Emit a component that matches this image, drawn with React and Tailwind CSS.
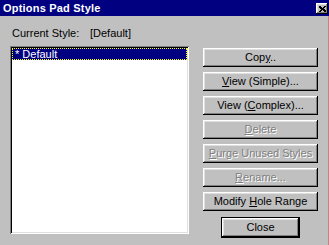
import React from 'react';

const bevel =
  'shadow-[inset_-1px_-1px_#000,inset_1px_1px_#fff,inset_-2px_-2px_#808080,inset_2px_2px_#dfdfdf]';

const Btn = ({ children, disabled, isDefault, className = '' }) => (
  <div
    className={`h-[19px] flex items-center justify-center bg-[#c0c0c0] text-[11px] leading-none ${bevel} ${
      disabled ? 'text-[#808080] [text-shadow:1px_1px_0_#fff]' : 'text-black'
    } ${isDefault ? 'outline outline-1 outline-black' : ''} ${className}`}
  >
    <span>{children}</span>
  </div>
);

const U = ({ children }) => <span className="underline underline-offset-[1px]">{children}</span>;

export default function App() {
  return (
    <div
      className="w-[329px] h-[245px] bg-[#c0c0c0] flex flex-col overflow-hidden"
      style={{ fontFamily: '"Liberation Sans", Arial, sans-serif' }}
    >
      <div className="h-[16px] bg-[#000080] flex items-center justify-between pl-[3px] pr-[1px]">
        <span className="text-white font-bold text-[11px] leading-none tracking-[0.2px]">Options Pad Style</span>
        <div className={`w-[12px] h-[11px] mt-[1px] bg-[#c0c0c0] flex items-center justify-center ${bevel}`}>
          <svg width="7" height="6" viewBox="0 0 7 6">
            <path d="M0 0h2v1h1v1h1V1h1V0h2v1H6v1H5v1h1v1h1v2H5V5H4V4H3v1H2v1H0V5h1V4h1V3H1V2H0z" fill="#000" />
          </svg>
        </div>
      </div>
      <div className="flex-1 flex border-r border-[#c08484]">
        <div className="pl-[10px] pt-[11px] flex flex-col">
          <div className="flex h-[13px] items-center text-[11px] text-black">
            <span className="pl-[2px] w-[80px]">Current Style:</span>
            <span>[Default]</span>
          </div>
          <div className="mt-[6px] w-[179px] h-[188px] bg-white p-[2px] shadow-[inset_1px_1px_#808080,inset_-1px_-1px_#fff,inset_2px_2px_#000,inset_-2px_-2px_#dfdfdf]">
            <div className="h-[12px] bg-[#000080] outline outline-1 outline-dotted outline-[#ffff00] -outline-offset-1 flex items-center pl-[3px] text-white text-[11px] leading-none">
              * Default
            </div>
          </div>
        </div>
        <div className="ml-[14px] pt-[32px] w-[115px] flex flex-col gap-[5px]">
          <Btn>Cop<U>y</U>..</Btn>
          <Btn><U>V</U>iew (Simple)...</Btn>
          <Btn>View (<U>C</U>omplex)...</Btn>
          <Btn disabled><U>D</U>elete</Btn>
          <Btn disabled><U>P</U>urge Unused Styles</Btn>
          <Btn disabled><U>R</U>ename...</Btn>
          <Btn>Modify <U>H</U>ole Range</Btn>
          <div className="flex justify-center pt-[2px]">
            <Btn isDefault className="w-[77px]">Close</Btn>
          </div>
        </div>
      </div>
    </div>
  );
}
